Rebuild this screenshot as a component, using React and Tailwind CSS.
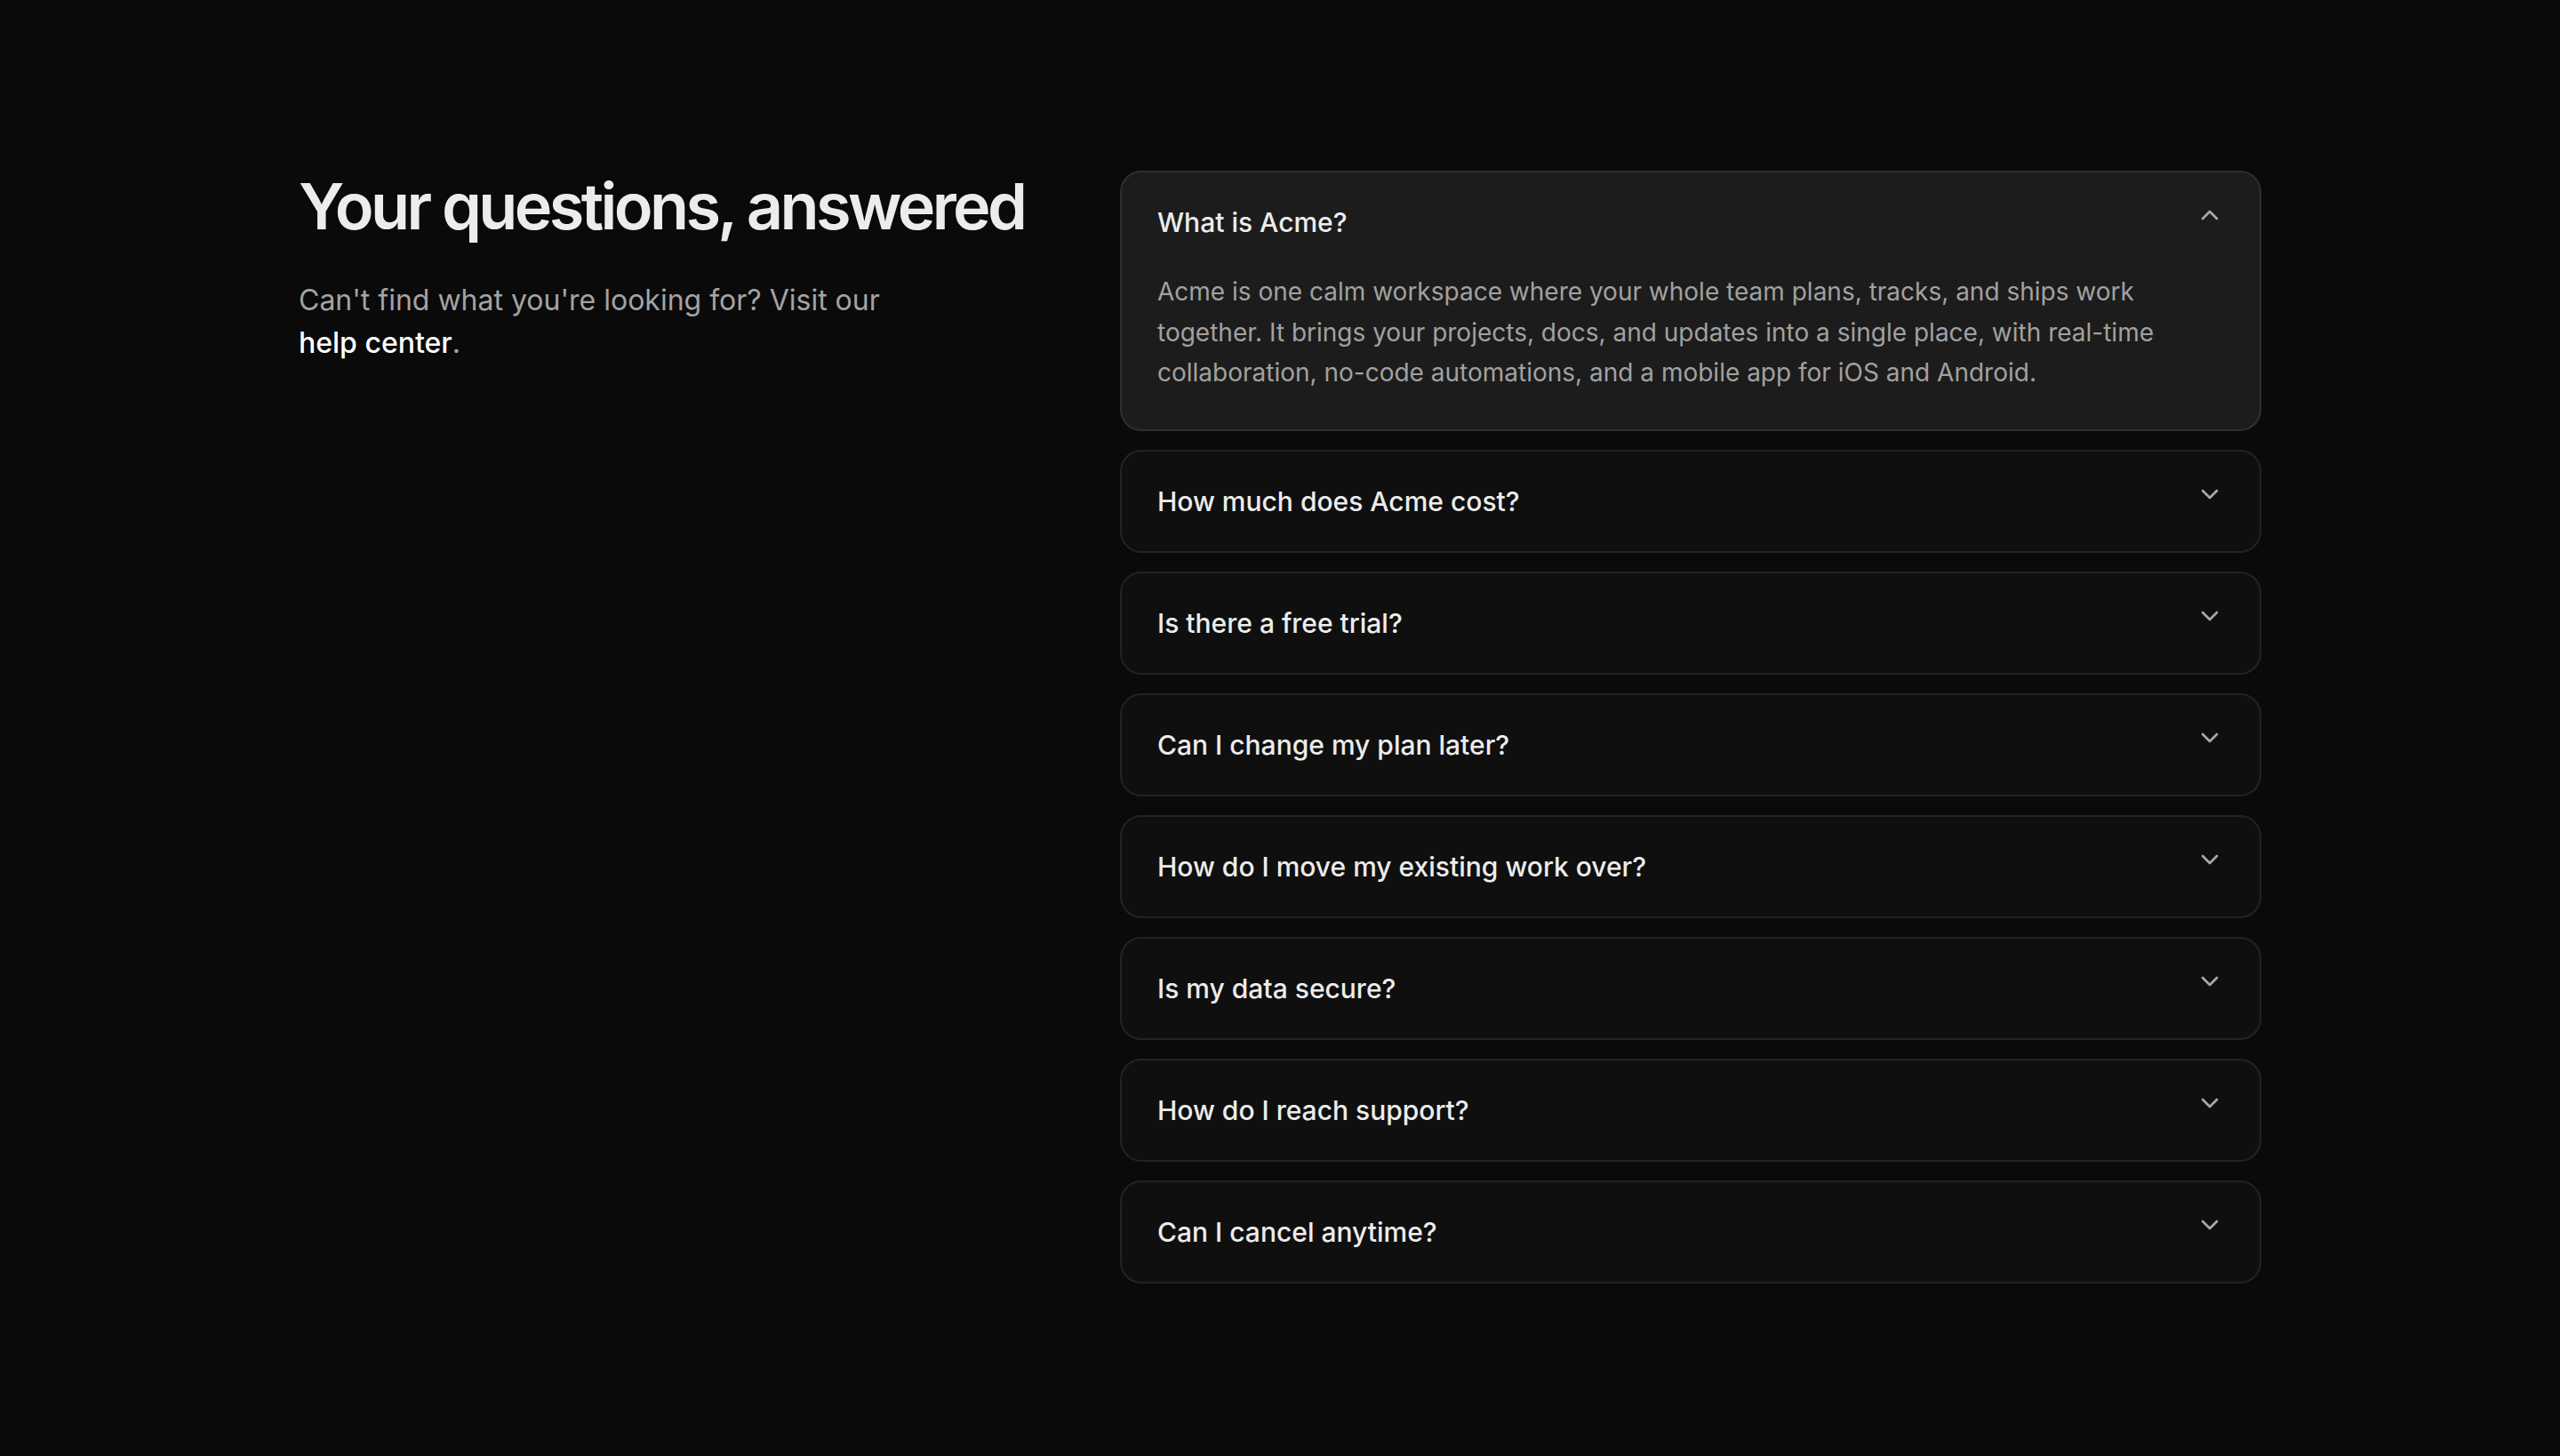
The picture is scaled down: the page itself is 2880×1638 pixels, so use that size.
import React, { useState } from "react";
import { ChevronDown } from "lucide-react";

const faqs = [
  {
    q: "What is Acme?",
    a: "Acme is one calm workspace where your whole team plans, tracks, and ships work together. It brings your projects, docs, and updates into a single place, with real-time collaboration, no-code automations, and a mobile app for iOS and Android.",
  },
  { q: "How much does Acme cost?", a: "Acme has a free plan for small teams, with paid plans that scale as you grow." },
  { q: "Is there a free trial?", a: "Yes. Every paid plan comes with a 14-day free trial, no credit card required." },
  { q: "Can I change my plan later?", a: "You can upgrade or downgrade at any time from your workspace settings." },
  { q: "How do I move my existing work over?", a: "Use our importers to bring in projects and docs from the tools you already use." },
  { q: "Is my data secure?", a: "Your data is encrypted in transit and at rest, and we never sell it." },
  { q: "How do I reach support?", a: "Reach us any time through the help center or by email." },
  { q: "Can I cancel anytime?", a: "Yes. You can cancel your subscription at any time with no extra fees." },
];

function Item({ item, open, onToggle }) {
  return (
    <div
      className={
        open
          ? "rounded-[24px] border-2 border-[#2f2f2f] bg-[#1c1c1c]"
          : "rounded-[24px] border-2 border-[#232323] bg-[#0f0f0f]"
      }
    >
      <button
        type="button"
        onClick={onToggle}
        className="flex w-full items-start justify-between gap-6 px-10 py-8 text-left"
      >
        <span className="text-[30px] font-medium leading-[48px] text-[#ececec]">{item.q}</span>
        <ChevronDown
          size={32}
          strokeWidth={2}
          className={open ? "shrink-0 rotate-180 text-[#a8a8a8]" : "shrink-0 text-[#a8a8a8]"}
        />
      </button>
      {open && (
        <div className="px-10 pb-10">
          <p className="text-[28px] leading-relaxed text-[#a1a1a1]">{item.a}</p>
        </div>
      )}
    </div>
  );
}

export default function App() {
  const [openIdx, setOpenIdx] = useState(0);
  return (
    <main
      className="min-h-screen bg-[#0a0a0a] antialiased"
      style={{ fontFamily: "Inter, 'Noto Sans', sans-serif" }}
    >
      <section className="mx-auto grid max-w-[2304px] grid-cols-[minmax(0,1fr)_1284px] px-12 py-[192px]">
        <div>
          <h2 className="text-[72px] font-semibold leading-[80px] tracking-[-0.05em] text-[#ececec]">
            Your questions, answered
          </h2>
          <p className="mt-[42px] max-w-[690px] text-[32px] leading-[48px] text-[#a3a3a3]">
            Can't find what you're looking for? Visit our{" "}
            <a href="#" className="font-medium text-white">
              help center
            </a>
            .
          </p>
        </div>
        <div className="flex flex-col gap-[21px]">
          {faqs.map((item, i) => (
            <Item
              key={item.q}
              item={item}
              open={openIdx === i}
              onToggle={() => setOpenIdx(openIdx === i ? -1 : i)}
            />
          ))}
        </div>
      </section>
    </main>
  );
}
